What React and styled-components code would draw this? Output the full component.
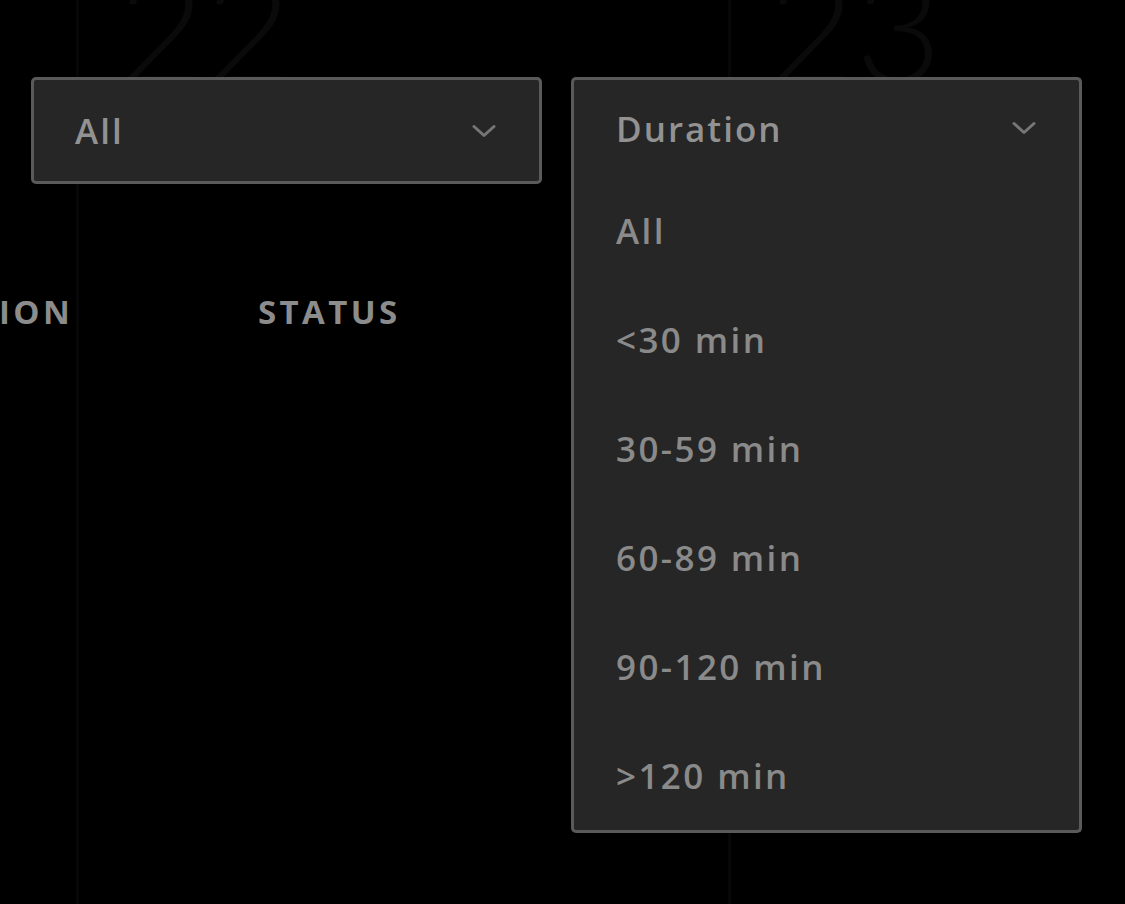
import React from "react";
import styled, { createGlobalStyle } from "styled-components";

const Global = createGlobalStyle`
  html, body { margin: 0; padding: 0; background: #000; }
  body { font-family: "Open Sans", "Liberation Sans", sans-serif; }
`;

const Page = styled.div`
  position: relative;
  width: 1125px;
  height: 904px;
  overflow: hidden;
  background-color: #000;
  background-image:
    linear-gradient(to right, transparent 76px, #070707 76px, #070707 79px, transparent 79px),
    linear-gradient(to right, transparent 728px, #070707 728px, #070707 731px, transparent 731px),
    repeating-linear-gradient(to bottom, transparent 0, transparent 233px, #060606 233px, #060606 236px, transparent 236px, transparent 370px);
  background-size: 100% 100%, 100% 100%, 100% 135px;
  background-position: 0 0, 0 0, 0 100px;
  background-repeat: no-repeat, no-repeat, repeat-y;
`;

const DayRow = styled.div`
  display: flex;
  height: 0;
  overflow: visible;
`;

const DayNumber = styled.div`
  width: ${(p) => p.$w}px;
  padding-left: ${(p) => p.$pad}px;
  margin-top: -50px;
  font-family: "Lato", "Open Sans", sans-serif;
  font-weight: 300;
  font-size: 150px;
  line-height: 1;
  color: #0a0a0a;
  box-sizing: border-box;
`;

const Filters = styled.div`
  display: flex;
  align-items: flex-start;
  gap: 29px;
  padding: 77px 0 0 31px;
`;

const SelectWrap = styled.div`
  position: relative;
  width: 511px;
`;

const Trigger = styled.div`
  box-sizing: border-box;
  height: ${(p) => (p.$open ? 99 : 107)}px;
  display: flex;
  align-items: center;
  justify-content: space-between;
  padding: 0 43px 0 ${(p) => (p.$open ? 42 : 41)}px;
  background: #262626;
  border: 3px solid #5a5a5a;
  border-bottom: ${(p) => (p.$open ? "none" : "3px solid #5a5a5a")};
  border-radius: ${(p) => (p.$open ? "5px 5px 0 0" : "5px")};
`;

const Label = styled.span`
  font-size: 35px;
  font-weight: 600;
  letter-spacing: 2px;
  color: #929292;
`;

const Menu = styled.ul`
  position: absolute;
  top: 100%;
  left: 0;
  right: 0;
  margin: 0;
  padding: 0;
  list-style: none;
  box-sizing: border-box;
  background: #262626;
  border: 3px solid #5a5a5a;
  border-top: none;
  border-radius: 0 0 5px 5px;
  z-index: 2;
`;

const Option = styled.li`
  height: 109px;
  display: flex;
  align-items: center;
  padding-left: 42px;
  font-size: 35px;
  font-weight: 600;
  letter-spacing: 2.4px;
  color: #8a8a8a;
`;

const TableHead = styled.div`
  display: flex;
  margin: 111px 0 0 -131px;
`;

const HeadCell = styled.div`
  width: ${(p) => p.$w}px;
  font-size: 33px;
  font-weight: 700;
  letter-spacing: 3.4px;
  color: #8c8c8c;
  line-height: 34px;
`;

const Chevron = () => (
  <svg width="24" height="14" viewBox="0 0 24 14" fill="none">
    <path d="M2 2.5 L12 11.5 L22 2.5" stroke="#767676" strokeWidth="3" strokeLinecap="round" strokeLinejoin="round" />
  </svg>
);

const Select = ({ value, open, options }) => (
  <SelectWrap>
    <Trigger $open={open}>
      <Label>{value}</Label>
      <Chevron />
    </Trigger>
    {open && (
      <Menu>
        {options.map((o) => (
          <Option key={o}>{o}</Option>
        ))}
      </Menu>
    )}
  </SelectWrap>
);

export default function App() {
  return (
    <Page>
      <Global />
      <DayRow>
        <DayNumber $w={650} $pad={118}>22</DayNumber>
        <DayNumber $w={400} $pad={118}>23</DayNumber>
      </DayRow>
      <Filters>
        <Select value="All" />
        <Select
          value="Duration"
          open
          options={["All", "<30 min", "30-59 min", "60-89 min", "90-120 min", ">120 min"]}
        />
      </Filters>
      <TableHead>
        <HeadCell $w={389}>DURATION</HeadCell>
        <HeadCell $w={200}>STATUS</HeadCell>
      </TableHead>
    </Page>
  );
}
